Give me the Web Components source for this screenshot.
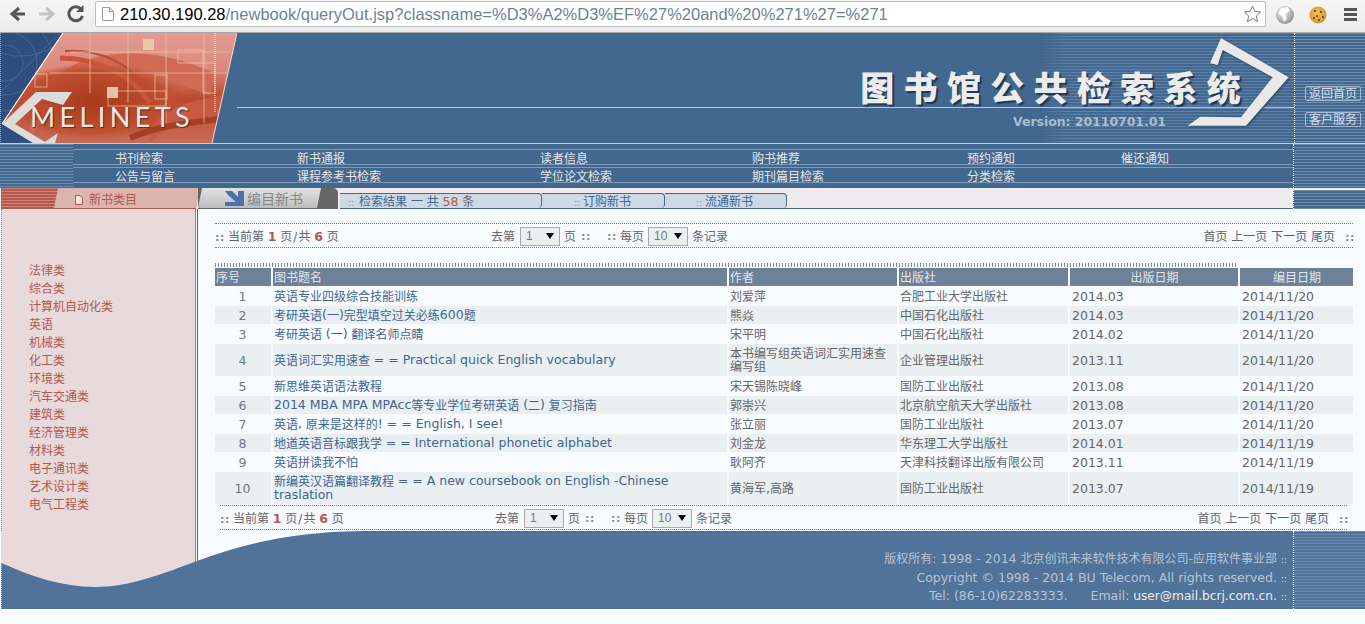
<!DOCTYPE html>
<html lang="zh"><head><meta charset="utf-8"><title>图书馆公共检索系统</title>
<style>
html,body{margin:0;padding:0;background:#f8fbff}
body{width:1365px;height:624px;overflow:hidden;font:12px/14px "DejaVu Sans","Noto Sans CJK SC",sans-serif;color:#666}
main-area{display:flex}
</style></head><body>
<browser-bar></browser-bar>
<site-banner></site-banner>
<site-nav></site-nav>
<tab-bar></tab-bar>
<main-area>
  <side-menu></side-menu>
  <result-pane></result-pane>
</main-area>
<site-footer></site-footer>
<script>
const FONT='"DejaVu Sans","Noto Sans CJK SC",sans-serif';
const lat=s=>s.replace(/[!-~©]+(?: +[!-~©]+)*/g,m=>`<span class="l">${m}</span>`).replace(/\n/g,'<br>');
const BASE=`.l{font-size:12.5px;position:relative;top:-1px}`;
class El extends HTMLElement{
  constructor(){super();this.attachShadow({mode:'open'})}
  set html(v){this.shadowRoot.innerHTML=v}
}
const STRIPES=`repeating-linear-gradient(to bottom,#6e8eb0 0 1px,#42688f 1px 3px)`;

customElements.define('browser-bar',class extends El{connectedCallback(){this.html=`<style>
:host{display:flex;align-items:flex-start;height:32px;border-bottom:1px solid #a9a9a9;background:linear-gradient(#f5f5f5,#ececec);box-sizing:content-box}
svg{display:block;flex:none}
.nav{display:flex;width:95px;height:28px;align-items:center}
.box{margin-top:1px;width:1171px;height:26px;box-sizing:border-box;background:#fff;border:1px solid #bdbdbd;border-radius:2px;display:flex;align-items:center;padding-left:6px;font:16.5px/24px "Liberation Sans",sans-serif;color:#6e8296;white-space:nowrap}
.box b{font-weight:400;color:#000}
.box span{margin-left:6px}
.box i{flex:1}
.tools{display:flex;align-items:center;height:28px}
</style>
<div class="nav"><svg width="95" height="28" viewBox="0 0 95 28">
<path d="M25 14H15M19 8l-7 6 7 6" fill="none" stroke="#555" stroke-width="3"/>
<path d="M39 14h11M46 8l7 6-7 6" fill="none" stroke="#c4c4c4" stroke-width="3"/>
<path d="M81 9a7 7 0 1 0 1.500 7" fill="none" stroke="#555" stroke-width="3"/><path d="M76 12h7.500V5z" fill="#555"/>
</svg></div>
<div class="box"><svg width="12" height="14" viewBox="0 0 12 14"><path d="M.5.5h7l4 4v9H.5zM7.500.5v4h4" fill="#fff" stroke="#999"/></svg>
<span><b>210.30.190.28</b>/newbook/queryOut.jsp?classname=%D3%A2%D3%EF%27%20and%20%271%27=%271</span><i></i>
<svg width="19" height="18" viewBox="0 0 19 18" style="margin-right:3px"><path d="M9.500 1l2.400 5.400 5.800.6-4.400 3.900 1.300 5.700-5.100-3-5.100 3 1.300-5.700L1.300 7l5.800-.6z" fill="#fff" stroke="#777"/></svg></div>
<div class="tools"><svg width="99" height="28" viewBox="0 0 99 28">
<defs><radialGradient id="g" cx=".4" cy=".35" r=".7"><stop offset="0" stop-color="#f4f4f4"/><stop offset="1" stop-color="#8d8d8d"/></radialGradient>
<radialGradient id="c" cx=".45" cy=".4" r=".7"><stop offset="0" stop-color="#f2c35f"/><stop offset="1" stop-color="#d08a28"/></radialGradient></defs>
<circle cx="19" cy="15" r="9" fill="url(#g)"/><path d="M15 8l7-1 2 4-5 3 2 5-3 3-2-6-4-2z" fill="#fdfdfd"/>
<circle cx="52" cy="15" r="8.500" fill="url(#c)"/><g fill="#5b3413"><circle cx="49" cy="11" r="1"/><circle cx="55" cy="12" r="1"/><circle cx="51" cy="16" r="1"/><circle cx="57" cy="17" r="1"/><circle cx="48" cy="18" r="1"/><circle cx="53" cy="20" r="1"/></g>
<g fill="#555"><rect x="78" y="8" width="13" height="3"/><rect x="78" y="13" width="13" height="3"/><rect x="78" y="18" width="13" height="3"/></g>
</svg></div>`}});

customElements.define('site-banner',class extends El{connectedCallback(){this.html=`<style>
:host{display:flex;height:111px;box-sizing:border-box;background:#42688f;border-bottom:1px solid #c3cfdc;overflow:hidden}
.logo{flex:none;display:block}
.mid{flex:1;display:flex;flex-direction:column;align-items:flex-end;position:relative;background:linear-gradient(90deg,#42688f 0 803px,rgba(66,104,143,.35) 830px),${STRIPES}}
.rule{position:absolute;left:0;right:0;top:74px;height:1px;background:#b9c7d8}
.title{margin:33px 44px 0 0;font:900 34px/42px "Noto Sans CJK SC",sans-serif;letter-spacing:9.300px;color:#ececec;text-shadow:2px 2px 1px #1d3856;white-space:nowrap;position:relative}
.ver{margin:6px 128px 0 0;font:700 12.500px/16px "DejaVu Sans",sans-serif;color:#aabdd3;position:relative;letter-spacing:-.05px}
.arrow{position:absolute;right:0;top:0;overflow:visible}
.side{flex:none;width:71px;border-left:1px dotted #fff;background:${STRIPES};display:flex;flex-direction:column;align-items:flex-end;padding:53px 4px 0 0;gap:11px;box-sizing:border-box}
.side span{display:block;width:56px;height:15px;box-sizing:border-box;border:1px solid #a6bad1;border-radius:2px;font:12px/15px ${FONT};color:#d5dee8;text-align:center;white-space:nowrap}
</style>
<svg class="logo" width="237" height="110" viewBox="0 0 237 110">
<defs>
<clipPath id="p"><polygon points="63,0 237,0 212,110 33,110 2,91"/></clipPath>
<linearGradient id="r" x1="0" y1="0" x2="0" y2="1"><stop offset="0" stop-color="#e39a92"/><stop offset=".32" stop-color="#dc8a7c"/><stop offset=".6" stop-color="#b9492d"/><stop offset="1" stop-color="#c86b55"/></linearGradient>
<radialGradient id="e" cx=".5" cy=".5" r=".5"><stop offset="0" stop-color="#a93a1e"/><stop offset=".8" stop-color="#bf4f2f"/><stop offset="1" stop-color="#bf4f2f" stop-opacity="0"/></radialGradient>
</defs>
<rect width="80" height="110" fill="#2f4e7f"/>
<g fill="none" stroke="#5f7ca6" stroke-width=".6" opacity=".8"><circle cx="5" cy="30" r="18"/><circle cx="5" cy="30" r="32"/><circle cx="5" cy="30" r="48"/><path d="M0 60L60 0M0 20Q30 30 60 10"/></g>
<path d="M0 0v110" stroke="#fff" stroke-dasharray="1 1"/>
<g clip-path="url(#p)">
<rect width="237" height="110" fill="url(#r)"/>
<path d="M30 110C50 60 100 20 210 62L214 40C150 10 70 10 30 70z" fill="#d06a55"/>
<ellipse cx="95" cy="68" rx="90" ry="38" fill="url(#e)"/>
<path d="M60 25C100 25 135 45 150 70" fill="none" stroke="#c9563a" stroke-width="5"/>
<path d="M65 18C100 16 130 30 148 58" fill="none" stroke="#b84e34" stroke-width="2"/>
<path d="M150 95C170 70 195 68 225 62V82C195 82 170 90 150 110z" fill="#c95a42"/>
<path d="M130 105C160 92 190 90 222 86" fill="none" stroke="#a53e24" stroke-width="6"/>
<g fill="none" stroke="#f0c8b0" stroke-width=".8" opacity=".85">
<path d="M90 0v60M128 0v70M166 0v90M204 0v90M50 40H230M70 19H230"/>
<rect x="178" y="17" width="25" height="13"/><rect x="155" y="42" width="12" height="24"/><rect x="35" y="41" width="12" height="13"/><rect x="108" y="58" width="58" height="15"/><rect x="203" y="30" width="12" height="30"/>
</g>
<rect x="143" y="6" width="11" height="11" fill="#e7c9a6"/><rect x="107" y="54" width="11" height="11" fill="#e4c3a2"/>
<path d="M215 0v80" stroke="#fff" stroke-dasharray="1 1"/>
</g>
<path d="M63 0L2 91" stroke="#fff" stroke-width="1.200"/><path d="M237 0L212 110" stroke="#f1dcd6" stroke-width="1"/>
<polygon points="2,91 36,59 72,59 63,72 42,66 15,91 45,109 58,100 55,110 33,110" fill="#dcdcdc"/>
<text x="30" y="94" font-family="Lato,'Open Sans',sans-serif" font-size="27" letter-spacing="4.400" fill="#e9e9e9" style="text-shadow:1px 1px 1px #5a2a1c">MELINETS</text>
</svg>
<div class="mid"><div class="rule"></div>
<div class="title">图书馆公共检索系统</div><div class="ver">Version: 20110701.01</div>
<svg class="arrow" width="90" height="110" viewBox="0 0 90 110"><polygon points="17,5 84.700,44.300 42,92.700 -16.300,92.700 -3.700,83.700 37,84.300 68.700,44.300 18.700,17 13.700,32 6,30.300" fill="#e9e9e9" style="filter:drop-shadow(1px 1px 1px #27425f)"/></svg>
</div>
<div class="side"><span>返回首页</span><span>客户服务</span></div>`}});

customElements.define('site-nav',class extends El{connectedCallback(){
const rows=[['书刊检索','新书通报','读者信息','购书推荐','预约通知','催还通知'],['公告与留言','课程参考书检索','学位论文检索','期刊篇目检索','分类检索','']];
this.html=`<style>
:host{display:flex;height:44px;background:#42688f;color:#e6e6e6;overflow:hidden}
.left{flex:none;width:73px;background:${STRIPES}}
.c{flex:1;background:linear-gradient(#7f9ab7,#7f9ab7) 0 5px/100% 1px no-repeat,linear-gradient(#7f9ab7,#7f9ab7) 0 20px/100% 1px no-repeat,linear-gradient(#7f9ab7,#7f9ab7) 0 23px/100% 1px no-repeat,linear-gradient(#7f9ab7,#7f9ab7) 0 38px/100% 1px no-repeat;padding:8px 0 0 42px}
.r{display:grid;grid-template-columns:182px 243px 212px 215px 154px 100px;height:18px;line-height:15px;white-space:nowrap}
.side{flex:none;width:71px;border-left:1px dotted #fff;background:${STRIPES}}
</style><div class="left"></div><div class="c">${rows.map(r=>`<div class="r">${r.map(t=>`<span>${t}</span>`).join('')}</div>`).join('')}</div><div class="side"></div>`}});

customElements.define('tab-bar',class extends El{connectedCallback(){this.html=`<style>${BASE}
:host{display:flex;height:21px;background:#efeaed;overflow:hidden;position:relative}
.cat{flex:none;width:199px;margin-left:1px;position:relative;background:repeating-linear-gradient(to bottom,#cf8378 0 1px,#b9594c 1px 3px);border-bottom:1px solid #b9594c;box-sizing:border-box;clip-path:polygon(0 0,198px 0,195px 100%,0 100%)}
.cat div{height:20px;box-sizing:border-box;margin-left:53px;background:#dcb4ae;clip-path:polygon(4px 0,100% 0,100% 100%,0 100%);color:#b5574f;display:flex;align-items:center;padding:3px 0 0 21px;gap:6px;line-height:16px}
.cat svg{flex:none}
.cur{flex:none;width:140px;margin-left:-2px;height:21px;box-sizing:border-box;background:#666;border-radius:0 5px 0 0;position:relative}
.cur div{height:20px;box-sizing:border-box;background:linear-gradient(#e2e2e2,#bdbdbd);clip-path:polygon(4px 0,123px 0,119px 100%,0 100%);display:flex;align-items:center;padding:1px 0 0 27px;gap:3px;font-size:14px;color:#888;white-space:nowrap}
.tabs{display:flex;flex:1;border-bottom:1px solid #42688f;padding-top:5px;margin-left:2px;min-width:0}
.t{box-sizing:border-box;height:15px;background:#cfd9e4;border:1px solid #42688f;border-width:1px 1px 0 0;border-radius:0 4px 4px 0;color:#3e6593;line-height:16px;white-space:nowrap;padding-left:18px}
.t i{font-style:normal;color:#7f8fa3;font-size:9px;margin-right:5px}
.t b{font-weight:400;color:#b5574f}.t em{font-style:normal;color:#666}
.t .l{top:0}
.side{flex:none;width:71px;margin-top:2px;border-left:1px dotted #fff;background:${STRIPES}}
.grow{flex:1}
</style>
<div class="cat"><div><svg width="8" height="10" viewBox="0 0 8 10"><path d="M.5.5h4.500l2.500 2.500v6.500h-7z" fill="#f4e4e0" stroke="#b5574f"/></svg><span>新书类目</span></div></div>
<div class="cur"><div><svg width="19" height="15" viewBox="0 0 19 15"><polygon points="0,0 7,0 13,6 13,0 19,0 19,15 0,15 0,11 11,11 3,4" fill="#4a72aa"/></svg>编目新书</div></div>
<div class="tabs"><div class="t" style="width:202px;padding-left:8px"><i>::</i>检索结果 一 共 <b class="l">58</b> <em>条</em></div>
<div class="t" style="width:123px;padding-left:32px"><i style="margin-right:3px">::</i>订购新书</div>
<div class="t" style="width:122px;padding-left:31px"><i style="margin-right:3px">::</i>流通新书</div><div class="grow"></div></div>
<div class="side"></div>`}});

customElements.define('side-menu',class extends El{connectedCallback(){
const items='法律类 综合类 计算机自动化类 英语 机械类 化工类 环境类 汽车交通类 建筑类 经济管理类 材料类 电子通讯类 艺术设计类 电气工程类'.split(' ');
this.html=`<style>
:host{display:block;flex:none;width:197px;height:322px;box-sizing:border-box;margin-left:1px;border-right:1px solid #666;padding-right:1px;background:#f8fbff}
.in{height:100%;box-sizing:border-box;background:#e8dadb;border-right:1px solid #b57a78;border-left:1px dotted #b57a78;padding:53px 0 0 27px;color:#b5574f}
a{display:block;height:18px;line-height:18px}
</style><div class="in">${items.map(t=>`<a>${t}</a>`).join('')}</div>`}});

customElements.define('page-select',class extends El{connectedCallback(){this.html=`<style>
:host{display:inline-flex;align-items:center;justify-content:space-between;box-sizing:border-box;width:40px;height:19px;border:1px solid #aaa;background:#eaeff0;padding:0 5px 0 5px;font:12px/15px "Liberation Sans",sans-serif;color:#777}
svg{display:block}
</style><span>${this.getAttribute('value')}</span><svg width="8" height="6" viewBox="0 0 8 6"><polygon points="0,0 8,0 4,6" fill="#000"/></svg>`}});

customElements.define('page-bar',class extends El{connectedCallback(){
const mx=+this.getAttribute('mid')||276;
this.html=`<style>${BASE}
:host{display:flex;height:25px;box-sizing:border-box;border-top:1px dotted #777;border-bottom:1px dotted #777;align-items:center;white-space:nowrap;color:#666;line-height:16px}
b{color:#b5574f;font-size:12.500px;margin:0}
.c{display:inline-block;width:8px;color:#8a8a8a;font:700 11px/12px "DejaVu Sans",sans-serif;letter-spacing:.5px}
.left{flex:none;width:${mx}px;padding-top:2px;box-sizing:border-box}
.left .c{margin-right:5px}
.mid{flex:1;display:flex;align-items:center;padding-top:1px}
.mid>span,.mid>em{padding-top:1px;font-style:normal}
.mid page-select{margin:0 4px 0 5px}
.right{padding-top:2px}
.right a{color:#666}.right a.on{color:#3e6593}
.right .c{margin-left:10px}
.s{margin:0 1px}
</style>
<div class="left"><span class="c">::</span>当前第 <b>1</b> 页<span class="s">/</span>共 <b>6</b> 页</div>
<div class="mid"><em>去第</em><page-select value="1"></page-select><em>页</em><span class="c" style="margin-left:5px">::</span><span style="width:18px"></span><span class="c">::</span><em style="margin-left:5px">每页</em><page-select value="10" style="margin-left:4px"></page-select><em>条记录</em></div>
<div class="right"><a>首页</a> <a>上一页</a> <a class="on">下一页</a> <a class="on">尾页</a><span class="c">::</span></div>`}});

customElements.define('book-row',class extends El{connectedCallback(){
const d=this.data,hd=this.hasAttribute('head'),z=this.hasAttribute('z');
const cell=(v,cl)=>`<div class="${cl}">${lat(v)}</div>`;
this.html=`<style>${BASE}
.d .l,.n .l{top:0}
.t .l{top:-1px}
:host{display:grid;grid-template-columns:56px 454px 168px 169px 168px 113px;column-gap:2px;height:${this.getAttribute('h')}px}
div{display:flex;align-items:center;box-sizing:border-box;padding:2px 0 0 1px;background:${z?'#eaeff1':'transparent'};line-height:13px;min-width:0}
.n{justify-content:center;padding:0 1px 0 0;color:#6b7a88}
.d{padding:0 0 0 2px}
.t{color:#3e6593;line-height:14px;display:block}
.h{background:#6e8198;color:#e2e6ea;justify-content:flex-start}
.hc{background:#6e8198;color:#e2e6ea;justify-content:center}
</style>${hd?d.map((v,i)=>cell(v,i>3?'hc':'h')).join(''):
`${cell(d[0],'n')}<div><span class="t">${lat(d[1])}</span></div>${cell(d[2],'')}${cell(d[3],'')}${cell(d[4],'d')}${cell(d[5],'d')}`}`}});

customElements.define('book-table',class extends El{connectedCallback(){
const rows=[
['1','英语专业四级综合技能训练','刘爱萍','合肥工业大学出版社','2014.03','2014/11/20',20],
['2','考研英语(一)完型填空过关必练600题','熊焱','中国石化出版社','2014.03','2014/11/20',18],
['3','考研英语 (一) 翻译名师点睛','宋平明','中国石化出版社','2014.02','2014/11/20',20],
['4','英语词汇实用速查 = = Practical quick English vocabulary','本书编写组英语词汇实用速查编写组','企业管理出版社','2013.11','2014/11/20',32],
['5','新思维英语语法教程','宋天锡陈晓峰','国防工业出版社','2013.08','2014/11/20',20],
['6','2014 MBA MPA MPAcc等专业学位考研英语 (二) 复习指南','郭崇兴','北京航空航天大学出版社','2013.08','2014/11/20',18],
['7','英语, 原来是这样的! = = English, I see!','张立丽','国防工业出版社','2013.07','2014/11/20',20],
['8','地道英语音标跟我学 = = International phonetic alphabet','刘金龙','华东理工大学出版社','2014.01','2014/11/19',18],
['9','英语拼读我不怕','耿阿齐','天津科技翻译出版有限公司','2013.11','2014/11/19',20],
['10','新编英汉语篇翻译教程 = = A new coursebook on English -Chinese\ntraslation','黄海军,高路','国防工业出版社','2013.07','2014/11/19',32]];
this.html=`<style>:host{display:block}
.ticks{width:1023px;height:4px;margin-bottom:1px;background:repeating-linear-gradient(90deg,#8b8b8b 0 1px,transparent 1px 3px)}</style><div class="ticks"></div>`;
const h=document.createElement('book-row');h.data=['序号','图书题名','作者','出版社','出版日期','编目日期'];h.setAttribute('head','');h.setAttribute('h','18');this.shadowRoot.append(h);
rows.forEach((r,i)=>{const e=document.createElement('book-row');e.data=r;e.setAttribute('h',r[6]);if(i%2)e.setAttribute('z','');this.shadowRoot.append(e)});
}});

customElements.define('result-pane',class extends El{connectedCallback(){this.html=`<style>
:host{display:block;flex:1;box-sizing:border-box;height:322px;padding:14px 12px 0 17px;min-width:0}
book-table{margin-top:15px}
.bot{margin:1px 6px 0 5px}
</style><page-bar></page-bar><book-table></book-table><page-bar class="bot" mid="275"></page-bar>`}});

customElements.define('site-footer',class extends El{connectedCallback(){this.html=`<style>${BASE}
.l{top:0}
:host{display:flex;height:78px;background:#527399;color:#b5c4d6;overflow:hidden}
svg{flex:none;display:block}
.t{flex:1;text-align:right;padding-top:19px;white-space:nowrap}
.t>div{height:18.500px;line-height:18.500px}
.t i{font-style:normal;font-size:9px;margin-left:4px;color:#d5dee8}
.t b{font-weight:400;color:#ececec}
.t b .l{font-size:12.200px}
.side{flex:none;width:71px;border-left:1px dotted #fff;background:repeating-linear-gradient(to bottom,#6c8aac 0 1px,#527399 1px 3px);margin-left:6px}
</style>
<svg width="360" height="78" viewBox="0 1 360 78"><rect width="360" height="79" fill="#f8fbff"/><rect x="1" width="195" height="60" fill="#e8dadb"/><rect x="195" width="1" height="60" fill="#b57a78"/><rect x="197" width="1" height="60" fill="#666"/>
<path d="M1 32.700C30 46 62 57 95 57C130 57 165 43 197 31C250 11 300 2 360 1V79H1z" fill="#527399"/><path d="M1 33V79" stroke="#fff" stroke-dasharray="1 1"/></svg>
<div class="t"><div>${lat('版权所有: 1998 - 2014 北京创讯未来软件技术有限公司-应用软件事业部')}<i>::</i></div>
<div>${lat('Copyright © 1998 - 2014 BU Telecom, All rights reserved.')}<i>::</i></div>
<div>${lat('Tel: (86-10)62283333.')} &nbsp;&nbsp;&nbsp;&nbsp; ${lat('Email:')} <b>${lat('user@mail.bcrj.com.cn.')}</b><i>::</i></div></div>
<div class="side"></div>`}});
</script>
</body></html>
